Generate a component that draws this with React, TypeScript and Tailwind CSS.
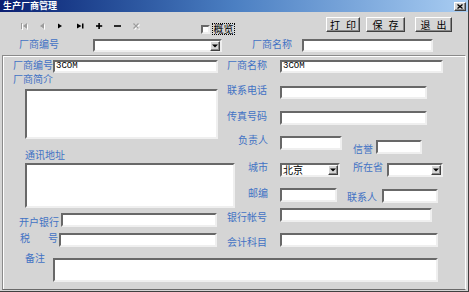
import React from "react";

const sunk =
  "bg-white border-2 border-t-[#686868] border-l-[#686868] border-r-[#efefef] border-b-[#efefef] shrink-0";
const raised =
  "bg-[#d5d5d5] border border-t-white border-l-white border-r-[#404040] border-b-[#404040] shadow-[inset_-1px_-1px_0_#8a8a8a] shrink-0";

const Label = ({ cls, children }: { cls: string; children: React.ReactNode }) => (
  <div className={`text-[10px] leading-[10px] text-[#4272c4] whitespace-nowrap shrink-0 ${cls}`}>
    {children}
  </div>
);

const Combo = ({ cls, value }: { cls: string; value?: string }) => (
  <div className={`${sunk} ${cls} flex items-center`}>
    <div className="flex-1 text-[10px] leading-[10px] text-black pl-[1px] whitespace-nowrap">
      {value}
    </div>
    <div className={`${raised} w-[10px] h-[10px] flex items-center justify-center`}>
      <svg width="6" height="4" viewBox="0 0 6 4">
        <path d="M0 0.5h6L3 3.5z" fill="#000" />
      </svg>
    </div>
  </div>
);

const Btn = ({ a, b, cls }: { a: string; b: string; cls: string }) => (
  <div className={`${raised} ${cls} h-[15px] flex items-center justify-center gap-[6px] text-[10px] leading-[10px] text-black`}>
    <span>{a}</span>
    <span>{b}</span>
  </div>
);

const Nav = ({ on, children }: { on: boolean; children: React.ReactNode }) => (
  <div className="w-[18.7px] h-[8px] shrink-0 flex items-start">
    <svg width="9" height="8" viewBox="0 0 9 8" className={on ? "text-black" : "text-[#9c9c9c]"}>
      {!on && <g transform="translate(1,1)" fill="#fff" stroke="#fff">{children}</g>}
      <g fill="currentColor" stroke="currentColor">{children}</g>
    </svg>
  </div>
);

export default function App() {
  return (
    <div
      className="w-[469px] h-[292px] bg-[#d5d5d5] flex flex-col overflow-hidden border-r border-b border-[#404040]"
      style={{ fontFamily: '"Noto Sans CJK SC", "Noto Sans", sans-serif' }}
    >
      {/* title bar */}
      <div className="h-[12px] shrink-0 bg-linear-to-r from-[#0c1f72] via-[#4b7fc2] to-[#a9cdf2] flex items-center">
        <div className="ml-[3px] text-white font-bold text-[9px] leading-[10px]">生产厂商管理</div>
        <div className={`${raised} ml-auto mr-[2px] w-[12px] h-[9px] flex items-center justify-center`}>
          <svg width="6" height="5" viewBox="0 0 6 5">
            <path d="M0.5 0.5L5.5 4.5M5.5 0.5L0.5 4.5" stroke="#000" strokeWidth="1.3" />
          </svg>
        </div>
      </div>

      {/* toolbar */}
      <div className="h-[43px] shrink-0 flex flex-col">
        <div className="mt-[5px] h-[15px] flex items-start">
          <div className="ml-[21px] w-[180px] mt-[6px] flex">
            <Nav on={false}>
              <rect x="0" y="0" width="1" height="6" stroke="none" />
              <path d="M6 0v6L2 3z" stroke="none" />
            </Nav>
            <Nav on={false}>
              <path d="M4 0v6L0 3z" stroke="none" />
            </Nav>
            <Nav on={true}>
              <path d="M0 0.5v5L4 3z" stroke="none" />
            </Nav>
            <Nav on={true}>
              <path d="M0 0.5v5L4.5 3z" stroke="none" />
              <rect x="5" y="0.5" width="1.5" height="5" stroke="none" />
            </Nav>
            <Nav on={true}>
              <rect x="2.3" y="0" width="1.6" height="6" stroke="none" />
              <rect x="0" y="2.2" width="6.2" height="1.6" stroke="none" />
            </Nav>
            <Nav on={true}>
              <rect x="0" y="2.2" width="7" height="1.6" stroke="none" />
            </Nav>
            <Nav on={false}>
              <path d="M0.5 0.5L5.5 5.5M5.5 0.5L0.5 5.5" fill="none" strokeWidth="1.2" />
            </Nav>
          </div>
          <div className={`${sunk} w-[9px] h-[9px] mt-[8px]`} />
          <div className="ml-[2px] mt-[6px] w-[23px] h-[12px] border border-dotted border-black flex items-center justify-center text-[10px] leading-[10px] text-black">
            概览
          </div>
          <Btn a="打" b="印" cls="ml-[91px] w-[34px]" />
          <Btn a="保" b="存" cls="ml-[6px] w-[39px]" />
          <Btn a="退" b="出" cls="ml-[10px] w-[37px]" />
        </div>
        <div className="mt-[6px] h-[14px] flex items-start">
          <Label cls="ml-[19px] w-[40px] mt-[1px] text-[#22a0a0]">厂商编号</Label>
          <Combo cls="ml-[34px] w-[129px] h-[13px] mt-[1px]" />
          <Label cls="ml-[30px] w-[40px] mt-[1px] text-[#22a0a0]">厂商名称</Label>
          <div className={`${sunk} ml-[10px] w-[131px] h-[13px] mt-[1px]`} />
        </div>
      </div>

      {/* group panel */}
      <div className="ml-[2px] w-[464px] h-[235px] shrink-0 border border-t-[#8a8a8a] border-l-[#8a8a8a] border-r-white border-b-[#6a6a6a] shadow-[inset_1px_1px_0_#fff] flex flex-col">
        <div className="flex">
          {/* left column */}
          <div className="ml-[10px] w-[214px] shrink-0 flex flex-col">
            <div className="mt-[4px] flex items-start">
              <Label cls="w-[40px]">厂商编号</Label>
              <div className={`${sunk} w-[165px] h-[13px] flex items-center`}>
                <span className="ml-[1px] text-[9px] leading-[9px] text-black" style={{ fontFamily: '"Liberation Mono", monospace' }}>
                  3COM
                </span>
              </div>
            </div>
            <Label cls="mt-[1px]">厂商简介</Label>
            <div className={`${sunk} ml-[12px] mt-[5px] w-[193px] h-[50px]`} />
            <Label cls="ml-[12px] mt-[11px]">通讯地址</Label>
            <div className={`${sunk} ml-[12px] mt-[3px] w-[210px] h-[45px]`} />
            <div className="mt-[5px] flex items-start">
              <Label cls="ml-[6px] w-[40px] mt-[4px]">开户银行</Label>
              <div className={`${sunk} ml-[2px] w-[156px] h-[14px]`} />
            </div>
            <div className="mt-[6px] flex items-start">
              <Label cls="ml-[7px] w-[38px] flex justify-between">
                <span>税</span>
                <span>号</span>
              </Label>
              <div className={`${sunk} ml-[1px] w-[158px] h-[14px]`} />
            </div>
          </div>

          {/* right column */}
          <div className="flex flex-col">
            <div className="mt-[4px] flex items-start">
              <Label cls="w-[40px]">厂商名称</Label>
              <div className={`${sunk} ml-[13px] w-[163px] h-[13px] flex items-center`}>
                <span className="ml-[1px] text-[9px] leading-[9px] text-black" style={{ fontFamily: '"Liberation Mono", monospace' }}>
                  3COM
                </span>
              </div>
            </div>
            <div className="mt-[12px] flex items-start">
              <Label cls="w-[40px]">联系电话</Label>
              <div className={`${sunk} ml-[13px] mt-[1px] w-[147px] h-[13px]`} />
            </div>
            <div className="mt-[12px] flex items-start">
              <Label cls="w-[40px]">传真号码</Label>
              <div className={`${sunk} ml-[13px] w-[147px] h-[14px]`} />
            </div>
            <div className="mt-[10px] flex items-start">
              <Label cls="ml-[11px] w-[30px]">负责人</Label>
              <div className={`${sunk} ml-[12px] mt-[1px] w-[62px] h-[14px]`} />
              <Label cls="ml-[11px] w-[20px] mt-[9px]">信誉</Label>
              <div className={`${sunk} ml-[3px] mt-[5px] w-[46px] h-[14px]`} />
            </div>
            <div className="mt-[8px] flex items-start">
              <Label cls="ml-[21px] w-[20px]">城市</Label>
              <Combo cls="ml-[12px] mt-[1px] w-[60px] h-[14px]" value="北京" />
              <Label cls="ml-[13px] w-[30px]">所在省</Label>
              <Combo cls="ml-[4px] mt-[1px] w-[56px] h-[14px]" />
            </div>
            <div className="mt-[11px] flex items-start">
              <Label cls="ml-[21px] w-[20px]">邮编</Label>
              <div className={`${sunk} ml-[12px] w-[57px] h-[14px]`} />
              <Label cls="ml-[10px] w-[30px] mt-[4px]">联系人</Label>
              <div className={`${sunk} ml-[5px] mt-[1px] w-[56px] h-[14px]`} />
            </div>
            <div className="mt-[5px] flex items-start">
              <Label cls="w-[40px] mt-[4px]">银行帐号</Label>
              <div className={`${sunk} ml-[13px] w-[152px] h-[14px]`} />
            </div>
            <div className="mt-[11px] flex items-start">
              <Label cls="w-[40px] mt-[4px]">会计科目</Label>
              <div className={`${sunk} ml-[13px] w-[158px] h-[14px]`} />
            </div>
          </div>
        </div>

        {/* remarks */}
        <div className="mt-[6px] flex items-start">
          <Label cls="ml-[22px] w-[20px]">备注</Label>
          <div className={`${sunk} ml-[8px] mt-[5px] w-[385px] h-[24px]`} />
        </div>
      </div>
    </div>
  );
}
